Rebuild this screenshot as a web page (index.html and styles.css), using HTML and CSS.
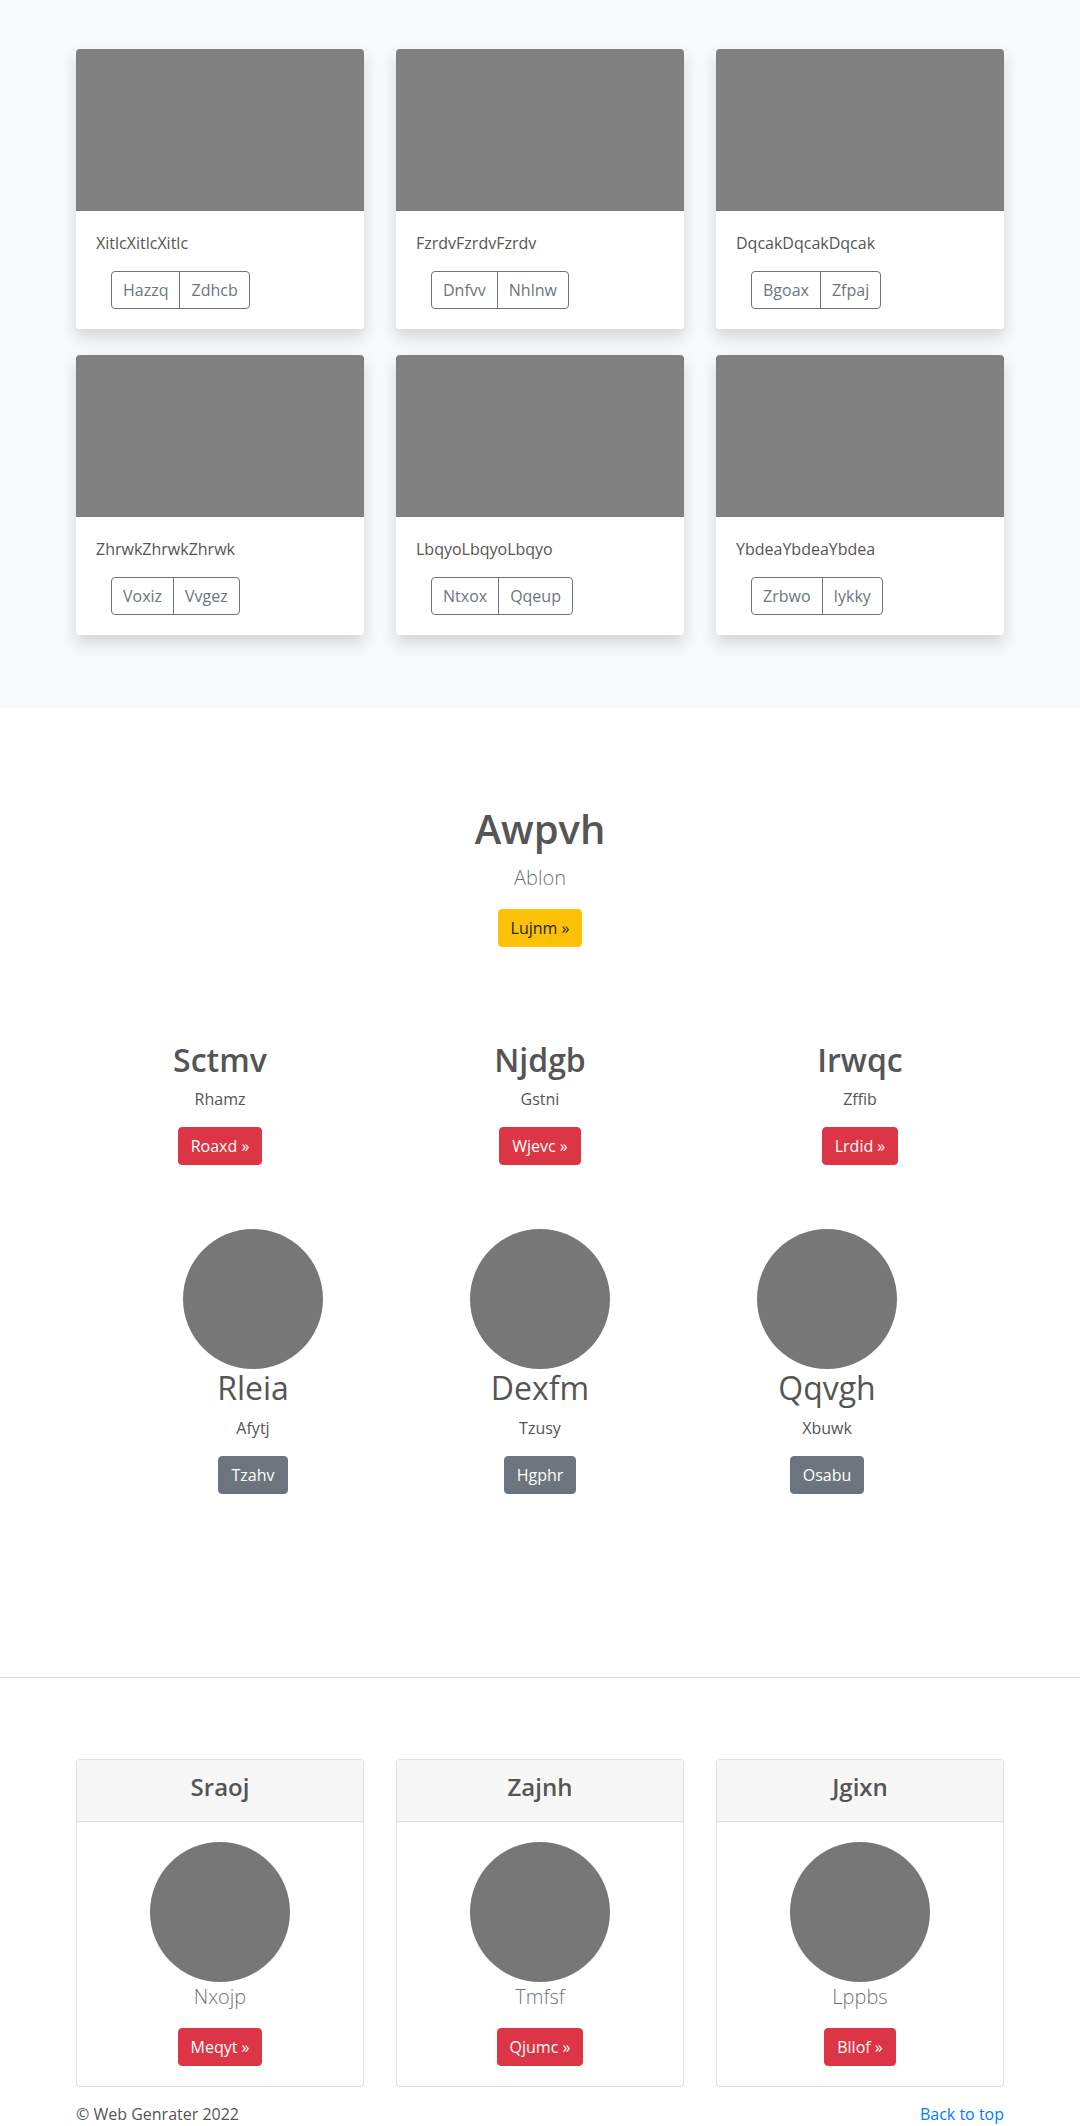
FILE: index.html
```html
<!DOCTYPE html>
<html lang="en">
<head>
<meta charset="utf-8">
<title>Page</title>
<link rel="stylesheet" href="styles.css">
</head>
<body>
<section class="album">
  <div class="album-grid">
    <div class="pcard">
      <div class="pcard-img"></div>
      <div class="pcard-body">
        <p class="pcard-text">XitlcXitlcXitlc</p>
        <div class="btn-group"><span class="gbtn">Hazzq</span><span class="gbtn">Zdhcb</span></div>
      </div>
    </div>
    <div class="pcard">
      <div class="pcard-img"></div>
      <div class="pcard-body">
        <p class="pcard-text">FzrdvFzrdvFzrdv</p>
        <div class="btn-group"><span class="gbtn">Dnfvv</span><span class="gbtn">Nhlnw</span></div>
      </div>
    </div>
    <div class="pcard">
      <div class="pcard-img"></div>
      <div class="pcard-body">
        <p class="pcard-text">DqcakDqcakDqcak</p>
        <div class="btn-group"><span class="gbtn">Bgoax</span><span class="gbtn">Zfpaj</span></div>
      </div>
    </div>
    <div class="pcard">
      <div class="pcard-img"></div>
      <div class="pcard-body">
        <p class="pcard-text">ZhrwkZhrwkZhrwk</p>
        <div class="btn-group"><span class="gbtn">Voxiz</span><span class="gbtn">Vvgez</span></div>
      </div>
    </div>
    <div class="pcard">
      <div class="pcard-img"></div>
      <div class="pcard-body">
        <p class="pcard-text">LbqyoLbqyoLbqyo</p>
        <div class="btn-group"><span class="gbtn">Ntxox</span><span class="gbtn">Qqeup</span></div>
      </div>
    </div>
    <div class="pcard">
      <div class="pcard-img"></div>
      <div class="pcard-body">
        <p class="pcard-text">YbdeaYbdeaYbdea</p>
        <div class="btn-group"><span class="gbtn">Zrbwo</span><span class="gbtn">Iykky</span></div>
      </div>
    </div>
  </div>
</section>

<section class="hero">
  <h1 class="hero-title">Awpvh</h1>
  <p class="lead">Ablon</p>
  <a class="btn btn-warning">Lujnm »</a>
</section>

<section class="features">
  <div class="feature">
    <h2 class="feature-title">Sctmv</h2>
    <p class="feature-text">Rhamz</p>
    <a class="btn btn-danger">Roaxd »</a>
  </div>
  <div class="feature">
    <h2 class="feature-title">Njdgb</h2>
    <p class="feature-text">Gstni</p>
    <a class="btn btn-danger">Wjevc »</a>
  </div>
  <div class="feature">
    <h2 class="feature-title">Irwqc</h2>
    <p class="feature-text">Zffib</p>
    <a class="btn btn-danger">Lrdid »</a>
  </div>
</section>

<section class="people">
  <div class="person">
    <div class="circle"></div>
    <h2 class="person-name">Rleia</h2>
    <p class="feature-text">Afytj</p>
    <a class="btn btn-secondary">Tzahv</a>
  </div>
  <div class="person">
    <div class="circle"></div>
    <h2 class="person-name">Dexfm</h2>
    <p class="feature-text">Tzusy</p>
    <a class="btn btn-secondary">Hgphr</a>
  </div>
  <div class="person">
    <div class="circle"></div>
    <h2 class="person-name">Qqvgh</h2>
    <p class="feature-text">Xbuwk</p>
    <a class="btn btn-secondary">Osabu</a>
  </div>
</section>

<hr class="divider">

<section class="team">
  <div class="tcard">
    <div class="tcard-header"><h3>Sraoj</h3></div>
    <div class="tcard-body">
      <div class="circle"></div>
      <p class="lead muted">Nxojp</p>
      <a class="btn btn-danger">Meqyt »</a>
    </div>
  </div>
  <div class="tcard">
    <div class="tcard-header"><h3>Zajnh</h3></div>
    <div class="tcard-body">
      <div class="circle"></div>
      <p class="lead muted">Tmfsf</p>
      <a class="btn btn-danger">Qjumc »</a>
    </div>
  </div>
  <div class="tcard">
    <div class="tcard-header"><h3>Jgixn</h3></div>
    <div class="tcard-body">
      <div class="circle"></div>
      <p class="lead muted">Lppbs</p>
      <a class="btn btn-danger">Bllof »</a>
    </div>
  </div>
</section>

<footer class="footer">
  <span>© Web Genrater 2022</span>
  <a class="top-link">Back to top</a>
</footer>
</body>
</html>
```

FILE: styles.css
```css
* { box-sizing: border-box; }
html, body { margin: 0; padding: 0; }
body {
  font-family: "Open Sans", "Noto Sans", sans-serif;
  font-size: 16px;
  line-height: 1.5;
  color: #555;
  background: #fff;
}
h1, h2, h3, p { margin: 0; }

.album {
  background: #f8f9fa;
  padding: 49px 0 73px;
}
.album-grid {
  width: 928px;
  margin: 0 auto;
  display: grid;
  grid-template-columns: repeat(3, 288px);
  column-gap: 32px;
  row-gap: 26px;
}
.pcard {
  background: #fff;
  border-radius: 4px;
  overflow: hidden;
  box-shadow: 0 8px 16px rgba(0,0,0,0.15);
  height: 280px;
}
.pcard-img { height: 162px; background: #808080; }
.pcard-body { padding: 20px; }
.pcard-text { font-size: 16px; line-height: 24px; color: #555; margin-bottom: 16px; }
.btn-group { display: inline-flex; margin-left: 15px; }
.gbtn {
  display: inline-block;
  padding: 6px 11px;
  line-height: 24px;
  font-size: 16px;
  color: #6c757d;
  border: 1px solid #6c757d;
}
.gbtn:first-child { border-radius: 4px 0 0 4px; }
.gbtn + .gbtn { margin-left: -1px; border-radius: 0 4px 4px 0; }

.btn {
  display: inline-block;
  padding: 6px 12px;
  font-size: 16px;
  line-height: 24px;
  border-radius: 4px;
  border: 1px solid transparent;
  text-decoration: none;
}
.btn-warning { background: #ffc107; border-color: #ffc107; color: #212529; }
.btn-danger { background: #dc3545; border-color: #dc3545; color: #fff; }
.btn-secondary { background: #6c757d; border-color: #6c757d; color: #fff; }

.hero { text-align: center; padding-top: 97px; }
.hero-title { font-size: 40px; line-height: 48px; font-weight: 600; color: #555; margin-bottom: 10px; }
.lead { font-size: 20px; line-height: 30px; font-weight: 300; color: #6c757d; margin-bottom: 16px; }

.features {
  width: 960px;
  margin: 94px auto 0;
  display: grid;
  grid-template-columns: repeat(3, 1fr);
  text-align: center;
}
.feature-title { font-size: 32px; line-height: 38px; font-weight: 600; color: #555; margin-bottom: 8px; }
.feature-text { font-size: 16px; line-height: 24px; color: #555; margin-bottom: 16px; }

.people {
  width: 861px;
  margin: 64px auto 0;
  display: grid;
  grid-template-columns: repeat(3, 1fr);
  text-align: center;
}
.circle {
  width: 140px;
  height: 140px;
  border-radius: 50%;
  background: #777;
  margin: 0 auto;
}
.person-name { font-size: 32px; line-height: 38px; font-weight: 400; color: #555; margin-bottom: 9px; }

.divider {
  margin: 183px 0 0;
  border: 0;
  border-top: 1px solid #dedede;
}

.team {
  width: 928px;
  margin: 81px auto 0;
  display: grid;
  grid-template-columns: repeat(3, 288px);
  column-gap: 32px;
}
.tcard {
  border: 1px solid #dfdfdf;
  border-radius: 4px;
  text-align: center;
  overflow: hidden;
}
.tcard-header {
  background: #f7f7f7;
  border-bottom: 1px solid #dfdfdf;
  padding: 12px 20px;
}
.tcard-header h3 { font-size: 24px; line-height: 29px; font-weight: 600; color: #555; margin-bottom: 8px; }
.tcard-body { padding: 20px; }
.tcard-body .lead { margin-bottom: 16px; }

.footer {
  width: 928px;
  margin: 15px auto 0;
  display: flex;
  justify-content: space-between;
  font-size: 16px;
  line-height: 24px;
  color: #555;
  padding-bottom: 20px;
}
.top-link { color: #007bff; text-decoration: none; }
```
